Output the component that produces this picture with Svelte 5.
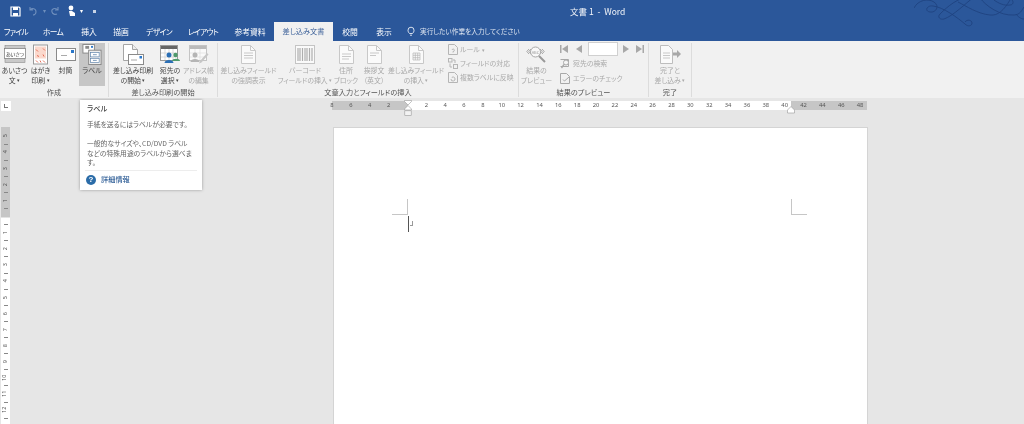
<script>
  const hNums = ['8','6','4','2','',...Array.from({length:24},(_,i)=>String((i+1)*2))];
  const vCells = ['5','-','4','-','3','-','2','-','1','-','','-',
    '1','-','2','-','3','-','4','-','5','-','6','-','7','-','8','-','9','-','10','-','11','-','12','-'];
</script>

<div class="app">
  <header class="top">
    <svg class="flourish" viewBox="0 0 110 28" width="110" height="28" fill="none" stroke="#1f4380" stroke-width=".9">
      <path d="M0 8C4 0 14-2 20 2s2 11-4 10-3-7 3-6c10 1 25 12 32 18 3 3 7 2 7-1s-5-4-7-1"/>
      <path d="M26 14C34 6 44-2 54-3M26 14c-3 3 0 6 4 5 9-3 22-16 30-22M44 2c8 4 20 12 32 13 8 1 14-5 20-15"/>
      <path d="M66-2c6 8 20 18 34 17 6 0 8-5 10-8M80 0c4 3 10 6 16 5 3 0 4-3 2-5M102 14c3 4 6 5 8 5"/>
    </svg>
    <div class="titlebar">
      <svg class="qa save" viewBox="0 0 11 11" width="11" height="11"><path d="M1 1h8l1 1v8H1z" fill="none" stroke="#fff" stroke-width="1.2"/><path d="M3 1h5v3H3zM3 7h5v3H3z" fill="#fff"/></svg>
      <svg class="qa undo" viewBox="0 0 10 10" width="10" height="10" fill="none" stroke="#6f8fbd" stroke-width="1.1"><path d="M2 1v3h3M2 4c2-2 6-2 6 2 0 2-2 3-3 3"/></svg>
      <span class="mini dim">▾</span>
      <svg class="qa redo" viewBox="0 0 10 10" width="10" height="10" fill="none" stroke="#6f8fbd" stroke-width="1.1"><path d="M8 1v3H5M8 4C5 1 1 3 2 6c.5 2 3 3 5 2"/></svg>
      <svg class="qa touch" viewBox="0 0 9 12" width="9" height="12"><circle cx="4" cy="3" r="2.4" fill="#fff"/><path d="M2 6h3l3 2v3H3z" fill="#fff"/></svg>
      <span class="mini">▾</span>
      <span class="qat-more"></span>
      <span class="doc-title">文書 1 &nbsp;- &nbsp;Word</span>
    </div>
    <nav class="tabs">
      <span class="k">ファイル</span><span class="k">ホーム</span><span>挿入</span><span>描画</span><span class="k">デザイン</span><span class="k">レイアウト</span><span>参考資料</span>
      <span class="active">差し込み文書</span><span>校閲</span><span>表示</span>
      <span class="tell">
        <svg viewBox="0 0 8 11" width="8" height="11" fill="none" stroke="#e8edf5" stroke-width=".9"><path d="M2.5 7.5C1.5 6.5 1 5.5 1 4.2a3 3 0 0 1 6 0c0 1.3-.5 2.3-1.500 3.300zM3 9.200h2"/></svg>
        実行したい作業を入力してください
      </span>
    </nav>
  </header>

  <section class="ribbon">
    <div class="group g1">
      <div class="btns">
        <div class="btn">
          <svg viewBox="0 0 22 20" width="22" height="20"><rect x="1" y="1" width="20" height="4" fill="#c9c9c9" stroke="#8c8c8c" stroke-width=".6"/><rect x="1" y="13" width="20" height="5" fill="#c9c9c9" stroke="#8c8c8c" stroke-width=".6"/><rect x="0.500" y="4" width="21" height="10" fill="#fff" stroke="#777" stroke-width=".7"/><text x="11" y="11" font-size="4.800" text-anchor="middle" fill="#333">あいさつ</text></svg>
          <p>あいさつ<br/>文 <i>▾</i></p>
        </div>
        <div class="btn">
          <svg viewBox="0 0 15 20" width="15" height="20"><rect x=".5" y=".5" width="14" height="19" fill="#fff" stroke="#9a9a9a"/><rect x="2" y="2" width="11" height="12" fill="#fbd9cd"/><path d="M3 16l2 2M7 16l1 2M10 16l2 2M3 5l2 2M10 4l2 2M4 11l2 1M10 10l1 2" stroke="#e0604a" stroke-width=".9"/></svg>
          <p>はがき<br/>印刷 <i>▾</i></p>
        </div>
        <div class="btn">
          <svg viewBox="0 0 20 20" width="20" height="20"><rect x=".5" y="4" width="19" height="12" fill="#fff" stroke="#8a8a8a"/><rect x="15" y="5.500" width="3" height="3" fill="#2a77c9"/><path d="M5 11h6" stroke="#aaa"/></svg>
          <p>封筒</p>
        </div>
        <div class="btn on">
          <svg viewBox="0 0 20 22" width="20" height="22"><rect x=".5" y=".5" width="12" height="9" fill="#fff" stroke="#888"/><rect x="3" y="2" width="4" height="3" fill="#8a8a8a"/><rect x="9" y="2" width="2" height="2" fill="#2a77c9"/><rect x="6.500" y="6.500" width="13" height="15" fill="#eee" stroke="#888"/><rect x="8.500" y="9" width="9" height="4.500" fill="#fff" stroke="#5a7fa8" stroke-width=".7"/><rect x="8.500" y="15" width="9" height="4.500" fill="#fff" stroke="#5a7fa8" stroke-width=".7"/><path d="M11 11.200h4M11 17.200h4" stroke="#5a7fa8" stroke-width=".8"/></svg>
          <p>ラベル</p>
        </div>
      </div>
      <div class="glabel">作成</div>
    </div>

    <div class="group g2">
      <div class="btns">
        <div class="btn">
          <svg viewBox="0 0 22 21" width="22" height="21"><path d="M1.500.5h9l5 5v11h-14z" fill="#fff" stroke="#a5a5a5"/><path d="M10.500.5v5h5" fill="#eee" stroke="#a5a5a5"/><rect x="6.500" y="10.500" width="15" height="10" fill="#fff" stroke="#8a8a8a"/><rect x="17.500" y="12" width="2.500" height="2.500" fill="#2a77c9"/><path d="M9 16h6" stroke="#aaa"/></svg>
          <p>差し込み印刷<br/>の開始 <i>▾</i></p>
        </div>
        <div class="btn">
          <svg viewBox="0 0 20 19" width="20" height="19"><rect x=".5" y=".5" width="17" height="15" fill="#fff" stroke="#999"/><rect x="1" y="1" width="16" height="3" fill="#666"/><path d="M1 8h16M1 12h16M5 4v11M9 4v11M13 4v11" stroke="#ccc" stroke-width=".7"/><circle cx="9" cy="10" r="2.500" fill="#2b6fb5"/><path d="M4.500 18c0-4 9-4 9 0z" fill="#2b6fb5"/><circle cx="15.500" cy="10" r="2.200" fill="#4f9a6c"/><path d="M12 16c0-3 8-3 8 0z" fill="#4f9a6c"/></svg>
          <p>宛先の<br/>選択 <i>▾</i></p>
        </div>
        <div class="btn off">
          <svg viewBox="0 0 20 19" width="20" height="19"><rect x=".5" y=".5" width="17" height="15" fill="#fafafa" stroke="#c4c4c4"/><rect x="1" y="1" width="16" height="3" fill="#bbb"/><path d="M1 8h16M1 12h16M6 4v11M11 4v11" stroke="#ddd" stroke-width=".7"/><circle cx="6" cy="10" r="2.500" fill="#b5b5b5"/><path d="M1.500 17c0-4 9-4 9 0z" fill="#b5b5b5"/><path d="M11 16l7-8 1.500 1.500-7 8-2.500 1z" fill="#c6c6c6"/></svg>
          <p>アドレス帳<br/>の編集</p>
        </div>
      </div>
      <div class="glabel">差し込み印刷の開始</div>
    </div>

    <div class="group g3">
      <div class="btns">
        <div class="btn off">
          <svg viewBox="0 0 15 19" width="15" height="19" fill="#fafafa" stroke="#c8c8c8"><path d="M.5.5h9l5 5v13H.5z"/><path d="M9.500.5v5h5M3 8h9M3 10.500h9M3 13h9" fill="none"/></svg>
          <p>差し込みフィールド<br/>の強調表示</p>
        </div>
        <div class="btn off">
          <svg viewBox="0 0 20 19" width="20" height="19"><rect x=".5" y=".5" width="19" height="18" fill="#fafafa" stroke="#c4c4c4"/><path d="M3 3v13M5 3v13M7.500 3v13M10 3v13M12 3v13M14.500 3v13M17 3v13" stroke="#adadad" stroke-width="1.200"/></svg>
          <p>バーコード<br/>フィールドの挿入 <i>▾</i></p>
        </div>
        <div class="btn off">
          <svg viewBox="0 0 15 19" width="15" height="19" fill="#fafafa" stroke="#c8c8c8"><path d="M.5.5h9l5 5v13H.5z"/><path d="M9.500.5v5h5M3 9h9M3 11.500h9M3 14h7" fill="none"/></svg>
          <p>住所<br/>ブロック</p>
        </div>
        <div class="btn off">
          <svg viewBox="0 0 15 19" width="15" height="19" fill="#fafafa" stroke="#c8c8c8"><path d="M.5.5h9l5 5v13H.5z"/><path d="M9.500.5v5h5M3 8h9M3 10.500h6" fill="none"/></svg>
          <p>挨拶文<br/>(英文)</p>
        </div>
        <div class="btn off">
          <svg viewBox="0 0 15 19" width="15" height="19" fill="#fafafa" stroke="#c8c8c8"><path d="M.5.5h9l5 5v13H.5z"/><path d="M9.500.5v5h5" fill="none"/><path d="M4 8h7v7H4zM4 10.300h7M4 12.700h7M6.300 8v7M8.700 8v7" fill="none" stroke="#b5b5b5" stroke-width=".7"/></svg>
          <p>差し込みフィールド<br/>の挿入 <i>▾</i></p>
        </div>
        <div class="list off">
          <div class="li"><svg viewBox="0 0 10 11" width="10" height="11" fill="none" stroke="#b5b5b5"><path d="M.5.5h6l3 3v7H.5zM4 6a1.200 1.200 0 1 1 1 1.500V8.500"/></svg>ルール <i>▾</i></div>
          <div class="li"><svg viewBox="0 0 10 11" width="10" height="11" fill="none" stroke="#b5b5b5"><rect x=".5" y=".5" width="3.500" height="3.500"/><rect x="5.500" y="6.500" width="4" height="4"/><path d="M2 5.500v3.500h2M7 5V2H5"/></svg>フィールドの対応</div>
          <div class="li"><svg viewBox="0 0 10 11" width="10" height="11" fill="none" stroke="#b5b5b5"><path d="M.5.5h6l3 3v7H.5zM3 7a2 2 0 1 0 .8-1.600"/></svg>複数ラベルに反映</div>
        </div>
      </div>
      <div class="glabel">文章入力とフィールドの挿入</div>
    </div>

    <div class="group g4">
      <div class="btns">
        <div class="btn off">
          <svg viewBox="0 0 21 17" width="21" height="17" fill="none" stroke="#a8a8a8"><path d="M3 3L.8 5.500 3 8M5 3L2.800 5.500 5 8M16 3l2.200 2.500L16 8M14 3l2.200 2.500L14 8"/><circle cx="9.500" cy="6" r="5" fill="#f8f8f8"/><path d="M13 10l6 6" stroke-width="2" stroke="#999"/><text x="9.500" y="7.800" font-size="4" text-anchor="middle" fill="#999" stroke="none">ABC</text></svg>
          <p>結果の<br/>プレビュー</p>
        </div>
        <div class="preview off">
          <div class="nav">
            <svg viewBox="0 0 8 8" width="8" height="8" fill="#a8a8a8"><path d="M0 0h1.500v8H0zM8 0v8L2 4z"/></svg>
            <svg class="n2" viewBox="0 0 6 8" width="6" height="8" fill="#a8a8a8"><path d="M6 0v8L0 4z"/></svg>
            <div class="box"></div>
            <svg class="n3" viewBox="0 0 6 8" width="6" height="8" fill="#a8a8a8"><path d="M0 0v8l6-4z"/></svg>
            <svg class="n4" viewBox="0 0 8 8" width="8" height="8" fill="#a8a8a8"><path d="M0 0v8l6-4zM6.500 0H8v8H6.500z"/></svg>
          </div>
          <div class="li"><svg viewBox="0 0 11 11" width="11" height="11" fill="none" stroke="#a8a8a8"><path d="M.5 1.500h8v7h-8"/><circle cx="6" cy="4.500" r="2.500" fill="#f4f4f4"/><path d="M4 6.500L1.500 10" stroke-width="1.300"/></svg>宛先の検索</div>
          <div class="li"><svg viewBox="0 0 11 11" width="11" height="11" fill="none" stroke="#a8a8a8"><path d="M.5.5h6l3 3v7H.5zM3 6.500l1.500 1.500L9 4"/></svg>エラーのチェック</div>
        </div>
      </div>
      <div class="glabel">結果のプレビュー</div>
    </div>

    <div class="group g5">
      <div class="btns">
        <div class="btn off">
          <svg viewBox="0 0 21 19" width="21" height="19"><path d="M.5.5h8l4 4v14H.5z" fill="#fafafa" stroke="#bdbdbd"/><path d="M3 8h7M3 10.500h7M3 13h7" stroke="#c8c8c8"/><path d="M13 7.500h4V5l4 4-4 4v-2.500h-4z" fill="#a8a8a8"/></svg>
          <p>完了と<br/>差し込み <i>▾</i></p>
        </div>
      </div>
      <div class="glabel dark">完了</div>
    </div>
  </section>

  <main class="work">
    <aside class="left">
      <div class="corner"><span></span></div>
      <div class="vruler">
        {#each vCells as c}
          <span class="vc">{#if c === '-'}<b></b>{:else}<em>{c}</em>{/if}</span>
        {/each}
      </div>
    </aside>
    <div class="center">
      <div class="hruler">
        <div class="nums">
          {#each hNums as n}<span>{n}</span>{/each}
        </div>
        <svg class="ind l" viewBox="0 0 8 17" width="8" height="17"><path d="M.5.500h7v1L4 5 .5 1.500zM4 5.500L7.500 9v1h-7V9z" fill="#fff" stroke="#999" stroke-width=".6"/><rect x=".8" y="10.800" width="6.400" height="4.500" fill="#f3f3f3" stroke="#999" stroke-width=".6"/></svg>
        <svg class="ind r" viewBox="0 0 8 8" width="8" height="8"><path d="M4 .5L7.500 4v3h-7V4z" fill="#fff" stroke="#999" stroke-width=".6"/></svg>
      </div>
      <div class="page">
        <div class="marks"><span class="mk a"></span><span class="mk b"></span></div>
        <div class="caret"><span class="bar"></span><span class="para"></span></div>
      </div>
    </div>

    <div class="tip">
      <h4>ラベル</h4>
      <p>手紙を送るにはラベルが必要です。</p>
      <p class="sec">一般的なサイズや、CD/DVD ラベル<br/>などの特殊用途のラベルから選べま<br/>す。</p>
      <div class="more">
        <span class="q">?</span><span>詳細情報</span>
      </div>
    </div>
  </main>
</div>

<style>
  :global(body){margin:0;background:#e6e6e6;overflow:hidden}
  .app{width:1024px;height:424px;overflow:hidden;position:relative;background:#e6e6e6;
    font-family:"Noto Sans CJK JP","Noto Sans",sans-serif;font-feature-settings:"palt";color:#444;
    filter:blur(.3px)}

  .top{height:41px;background:#2b579a;position:relative;overflow:hidden}
  .flourish{position:absolute;left:914px;top:0}
  .titlebar{height:22px;display:flex;align-items:center;color:#fff;padding-left:10px;position:relative}
  .qa{display:block;flex:none}
  .undo{margin-left:7px}
  .redo{margin-left:2px}
  .touch{margin-left:6.500px}
  .mini{font-size:6px;width:8px;text-align:center;margin-left:2px;line-height:1}
  .mini.dim{color:#6f8fbd}
  .qat-more{width:3px;height:3px;background:#c8d4e6;margin-left:7px}
  .doc-title{margin-left:474.500px;font-size:8.500px;white-space:nowrap;font-family:"Noto Sans CJK JP",sans-serif;color:#f4f6fa}

  .tabs{height:19px;display:grid;grid-template-columns:32px 42px 30px 34px 42px 46px 48px 59px 34px 34px auto;
    align-items:center;text-align:center;font-size:7.800px;color:#fff;position:relative}
  .tabs span{line-height:19px;white-space:nowrap}
  .tabs .k{letter-spacing:-.7px}
  .tabs .active{background:#f1f1f1;color:#3a5f98;height:19px;font-size:7.200px}
  .tabs .tell{display:flex;align-items:center;gap:5px;margin-left:6px;color:#dfe6f1;font-size:6.700px;text-align:left}

  .ribbon{height:57px;background:#f1f1f1;display:flex;box-sizing:border-box;padding-top:1px}
  .group{display:flex;flex-direction:column;box-sizing:border-box;border-right:1px solid #dcdcdc;height:54px;margin-top:1px}
  .g1{width:109px}.g2{width:109px}.g3{width:301px}.g4{width:130px}.g5{width:43px}
  .btns{height:44px;display:grid;align-items:start}
  .g1 .btns{grid-template-columns:29px 23px 27px 26px}
  .g2 .btns{grid-template-columns:48px 26px 31px;padding-left:0}
  .g3 .btns{grid-template-columns:61px 52px 30px 26px 58px auto}
  .g4 .btns{grid-template-columns:35px auto}
  .g5 .btns{grid-template-columns:42px}
  .btn{height:43px;display:flex;flex-direction:column;align-items:center;box-sizing:border-box;padding-top:1px;position:relative}
  .btn svg{height:21px;flex:none;display:block}
  .btn.on{background:#c6c6c6}
  .btn p{margin:0;font-size:6.900px;line-height:10px;text-align:center;white-space:nowrap}
  .btn.off p,.list.off,.preview.off{color:#a9a9a9}
  i{font-style:normal;font-size:5px;vertical-align:1px}
  .glabel{height:10px;line-height:10px;font-size:7.200px;text-align:center;white-space:nowrap;color:#555}
  .list{padding:0 0 0 3px;display:flex;flex-direction:column;gap:2px;white-space:nowrap;font-size:6.900px}
  .li{display:flex;align-items:center;gap:2px;height:12px;white-space:nowrap}
  .preview{padding-left:6px;font-size:6.900px;display:flex;flex-direction:column;gap:3px;margin-top:-1px}
  .nav{display:flex;align-items:center;height:14px;margin-bottom:-2px}
  .nav .n2{margin-left:8px}
  .box{width:30px;height:14px;background:#fff;border:1px solid #d0d0d0;margin-left:6px;box-sizing:border-box}
  .nav .n3{margin-left:5px}
  .nav .n4{margin-left:7px}

  .work{display:flex;position:relative;height:326px;overflow:hidden}
  .left{width:332px;flex:none;padding:3px 0 0 1px;box-sizing:border-box}
  .corner{width:10px;height:10px;background:#fff;position:relative;display:flex;align-items:center;justify-content:center}
  .corner span{width:3px;height:3px;border-left:1px solid #777;border-bottom:1px solid #777}
  .vruler{margin-top:16px;width:9px;height:300px;padding-top:5px;box-sizing:border-box;
    background:linear-gradient(#c6c6c6 0 90px,#fff 91px)}
  .vc{display:flex;height:8.070px;align-items:center;justify-content:center}
  .vc b{width:4px;height:1px;background:#888}
  .vc em{font-style:normal;font-size:5.500px;color:#555;transform:rotate(-90deg);line-height:1;font-family:"Noto Sans",sans-serif}

  .center{width:536px;flex:none}
  .hruler{margin-top:3px;height:9px;width:535px;position:relative;
    background:linear-gradient(90deg,#c6c6c6 0 76px,#fff 76px 459px,#c6c6c6 459px)}
  .nums{display:flex;margin-left:-9.430px;height:9px;align-items:center}
  .nums span{width:18.860px;flex:none;text-align:center;font-size:5.800px;line-height:9px;color:#555;font-family:"Noto Sans",sans-serif}
  .ind{position:absolute;display:block}
  .ind.l{left:72px;top:-1px}
  .ind.r{left:455px;top:5px}
  .page{margin:17px 0 0 1px;width:535px;height:300px;background:#fff;border:1px solid #d4d4d4;border-bottom:0;box-sizing:border-box;padding-top:71px}
  .marks{display:flex;justify-content:space-between;padding:0 60px 0 58px}
  .mk{width:16px;height:16px;border-bottom:1px solid #c6c6c6;box-sizing:border-box}
  .mk.a{border-right:1px solid #c6c6c6}
  .mk.b{border-left:1px solid #c6c6c6}
  .caret{margin:1px 0 0 74px;display:flex;align-items:center;gap:1px}
  .bar{width:1px;height:16px;background:#555}
  .para{width:2px;height:4px;border-right:1px solid #999;border-bottom:1px solid #999;margin-top:-1px}

  .tip{position:absolute;left:80px;top:2px;width:122px;height:90px;background:#fff;box-shadow:0 0 3px #9a9a9a;
    box-sizing:border-box;padding:3px 7px 0;color:#666;font-size:6.800px;line-height:9.500px}
  .tip h4{margin:0;font-size:7.200px;font-weight:500;line-height:11px;color:#444}
  .tip p{margin:6px 0 0;white-space:nowrap}
  .tip p.sec{margin-top:9.500px}
  .more{margin:2px -2px 0;border-top:1px solid #ededed;display:flex;align-items:center;gap:5px;padding:4px 0 0 1px;
    color:#2a5a94;font-weight:500;font-size:7.200px}
  .q{width:10px;height:10px;border-radius:50%;background:#2b6ca8;color:#fff;font-size:8px;line-height:10px;text-align:center;font-weight:700;font-family:"Liberation Sans",sans-serif}
</style>
